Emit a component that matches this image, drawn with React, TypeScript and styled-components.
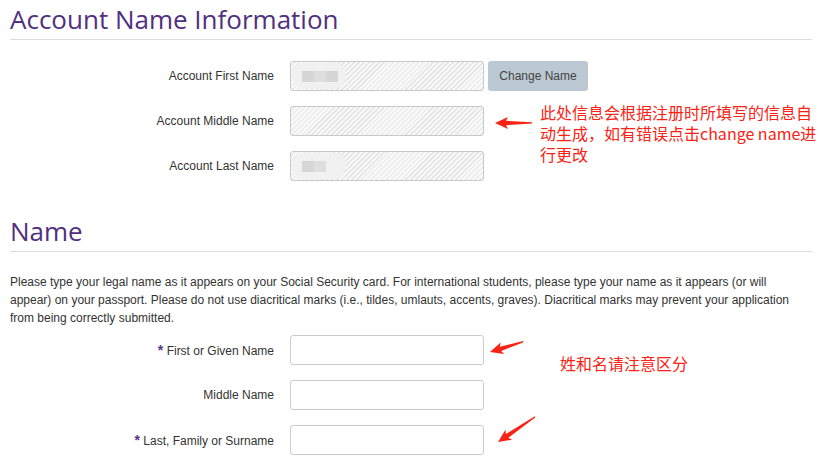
import React from 'react';
import styled, { createGlobalStyle } from 'styled-components';

const GlobalStyle = createGlobalStyle`
	html, body {
		margin: 0;
		padding: 0;
		background: #fff;
	}
	body {
		font-family: 'Liberation Sans', Arial, sans-serif;
		color: #333;
	}
`;

type NoteProps = {
	left: number;
	top: number;
	width?: number;
};

type ArrowProps = {
	left: number;
	top: number;
	angle: number;
	length: number;
};

// red callout arrow, tip on the left, tail on the right
const Arrow = ({ left, top, angle, length }: ArrowProps) => (
	<ArrowWrap left={left} top={top} angle={angle} length={length}>
		<svg width={length} height="14" viewBox={`0 0 ${length} 14`}>
			<path
				d={`M0 7 L13 1 L11 4.8 L${length} 6.2 L${length} 7.4 L11 9.2 L13 13 Z`}
				fill="#fa2214"
			/>
		</svg>
	</ArrowWrap>
);

const Blur = ({ blocks }: { blocks: number }) => (
	<BlurBlob>
		{Array.from({ length: blocks }).map((_, i) => (
			<BlurBlock key={i} shade={i % 2 === 0 ? '#d6d6d6' : '#dedede'} />
		))}
	</BlurBlob>
);

const App = () => (
	<>
		<GlobalStyle />
		<Page>
			<Section>
				<Title>Account Name Information</Title>
				<Rows top={21}>
					<Row>
						<Label>Account First Name</Label>
						<Field disabledLook>
							<Blur blocks={3} />
						</Field>
						<Button>Change Name</Button>
					</Row>
					<Row>
						<Label>Account Middle Name</Label>
						<Field disabledLook />
						<Arrow left={485} top={17} angle={0} length={37} />
						<Note left={530} top={-4} width={287}>
							此处信息会根据注册时所填写的信息自动生成，如有错误点击change name进行更改
						</Note>
					</Row>
					<Row>
						<Label>Account Last Name</Label>
						<Field disabledLook>
							<Blur blocks={2} />
						</Field>
					</Row>
				</Rows>
			</Section>

			<Section spaced>
				<Title>Name</Title>
				<Intro>
					Please type your legal name as it appears on your Social Security card. For international students,
					please type your name as it appears (or will appear) on your passport. Please do not use diacritical
					marks (i.e., tildes, umlauts, accents, graves). Diacritical marks may prevent your application from
					being correctly submitted.
				</Intro>
				<Rows top={0}>
					<Row>
						<Label>
							<Star>*</Star> First or Given Name
						</Label>
						<Field />
						<Arrow left={480} top={17} angle={-17} length={35} />
						<Note left={550} top={18}>姓和名请注意区分</Note>
					</Row>
					<Row>
						<Label>Middle Name</Label>
						<Field />
					</Row>
					<Row>
						<Label>
							<Star>*</Star> Last, Family or Surname
						</Label>
						<Field />
						<Arrow left={488} top={17} angle={-34} length={45} />
					</Row>
				</Rows>
			</Section>
		</Page>
	</>
);

const Page = styled.div`
	width: 802px;
	padding: 0 17px 0 10px;
`;

const Section = styled.section<{ spaced?: boolean }>`
	margin-top: ${(p) => (p.spaced ? '31px' : '0')};
`;

const Title = styled.h1`
	margin: 0;
	font-family: 'Open Sans', 'Noto Sans', sans-serif;
	font-weight: 400;
	font-size: 26px;
	line-height: 38px;
	color: #50307f;
	padding-bottom: 1px;
	border-bottom: 1px solid #dcdcdc;
`;

const Rows = styled.div<{ top: number }>`
	display: flex;
	flex-direction: column;
	gap: 15px;
	margin-top: ${(p) => p.top}px;
`;

const Row = styled.div`
	position: relative;
	display: flex;
	align-items: center;
	height: 30px;
`;

const Label = styled.label`
	width: 264px;
	margin-right: 16px;
	text-align: right;
	font-size: 12px;
	color: #333;
`;

const Star = styled.span`
	color: #56348a;
	font-weight: bold;
	font-size: 14px;
`;

const Field = styled.div<{ disabledLook?: boolean }>`
	box-sizing: border-box;
	width: 194px;
	height: 30px;
	border: 1px solid ${(p) => (p.disabledLook ? '#c9c9c9' : '#cccccc')};
	border-radius: 3px;
	padding: 1px;
	display: flex;
	align-items: center;
	background: ${(p) =>
		p.disabledLook
			? 'repeating-linear-gradient(135deg, #f8f8f8 0 2.4px, #e3e3e3 2.4px 3.5px)'
			: '#fff'};
`;

const BlurBlob = styled.div`
	display: flex;
	align-items: center;
	height: 26px;
	width: 54px;
	padding-left: 10px;
	box-sizing: border-box;
	border-radius: 13px;
	background: #f1f1f1;
`;

const BlurBlock = styled.span<{ shade: string }>`
	width: 12px;
	height: 11px;
	background: ${(p) => p.shade};
`;

const Button = styled.button`
	margin-left: 4px;
	width: 100px;
	height: 30px;
	border: none;
	border-radius: 3px;
	background: #bcc9d3;
	color: #444;
	font-family: 'Liberation Sans', Arial, sans-serif;
	font-size: 12px;
	padding: 0;
`;

const Intro = styled.p`
	width: 796px;
	margin: 21px 0 8px;
	font-size: 12px;
	line-height: 18px;
	color: #333;
`;

const ArrowWrap = styled.div<ArrowProps>`
	position: absolute;
	left: ${(p) => p.left}px;
	top: ${(p) => p.top - 7}px;
	width: ${(p) => p.length}px;
	height: 14px;
	line-height: 0;
	transform: rotate(${(p) => p.angle}deg);
	transform-origin: 0 7px;
`;

const Note = styled.div<NoteProps>`
	position: absolute;
	left: ${(p) => p.left}px;
	top: ${(p) => p.top}px;
	width: ${(p) => (p.width ? `${p.width}px` : 'auto')};
	white-space: ${(p) => (p.width ? 'normal' : 'nowrap')};
	font-family: 'Noto Sans CJK SC', 'Noto Sans', sans-serif;
	font-size: 16px;
	line-height: 21px;
	color: #fa2214;
`;

export default App;
